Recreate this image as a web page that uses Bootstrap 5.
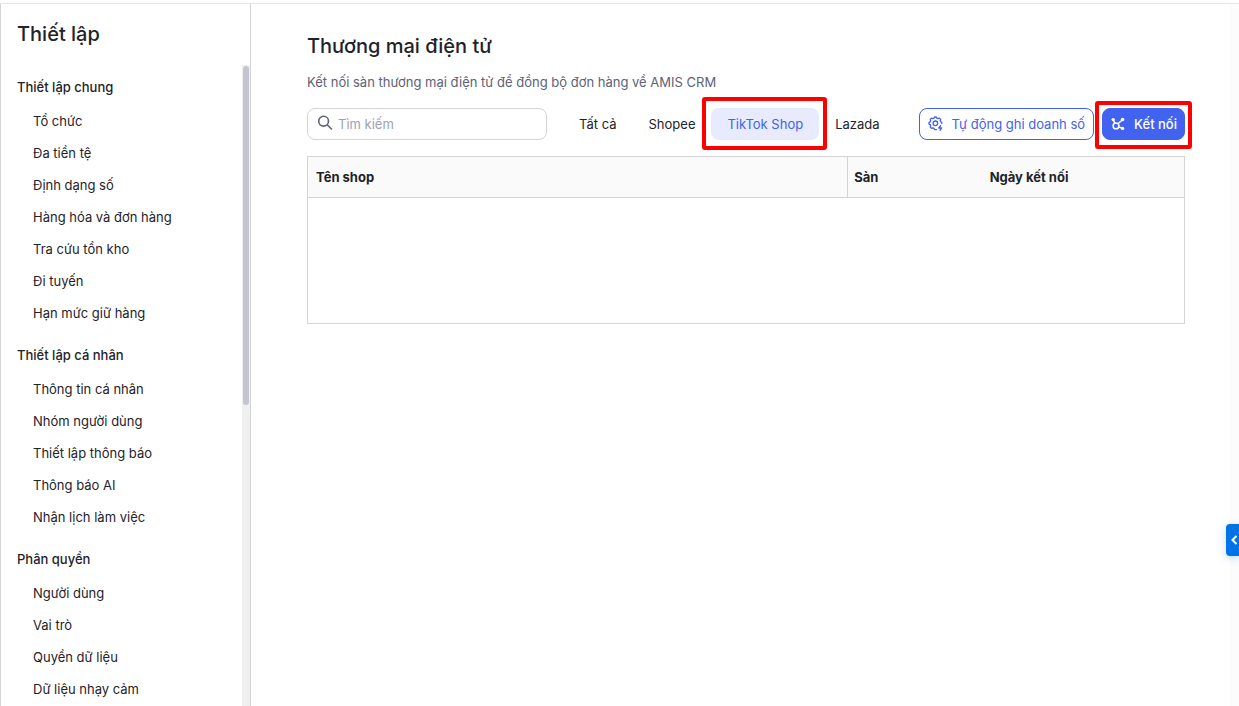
<!DOCTYPE html>
<html lang="vi">
<head>
<meta charset="utf-8">
<meta name="viewport" content="width=device-width, initial-scale=1">
<title>Thiết lập - Thương mại điện tử</title>
<link href="https://cdn.jsdelivr.net/npm/bootstrap@5.3.0/dist/css/bootstrap.min.css" rel="stylesheet">
<style>
  :root { --brand: #4262f0; --ink: #1f2229; --line: #d3d4d8; }
  body { font-family: Inter, "Noto Sans", sans-serif; font-size: 13px; line-height: 20px; color: var(--ink); background: #fff; }
  .app { border-top: 1px solid #e4e5e8; margin-top: 3px; height: calc(100vh - 3px); }
  .sidebar { flex: 0 0 251px; border-left: 1px solid var(--line); border-right: 1px solid var(--line); }
  .page-title { font-size: 20px; line-height: 28px; font-weight: 500; margin: 0; }
  .sidebar .page-title { padding: 16px 16px 17px; }
  .menu-title { font-size: 13px; line-height: 36px; font-weight: 500; margin: 0; }
  .menu-group + .menu-group { margin-top: 8px; }
  .menu-link { display: block; line-height: 32px; padding-left: 16px; color: var(--ink); text-decoration: none; }
  .menu-link:hover { color: var(--brand); }
  .track { width: 8px; background: #f0f0f0; padding: 1px; }
  .thumb { height: 53%; border-radius: 4px; background: #c3c6d1; }
  .content { padding: 28px 45px 0 56px; }
  .edge { flex: 0 0 9px; background: #fcfcfc; }
  .intro { color: #5d6277; }
  .search { width: 240px; margin-right: 16px; }
  .search input { height: 32px; font-size: 13px; border-color: var(--line); border-radius: 8px; padding: 0 12px 0 30px; }
  .search input::placeholder { color: #9da1b3; }
  .search svg { left: 10px; top: 7px; }
  .tab { height: 32px; padding: 0 16px; border: 0; border-radius: 8px; background: transparent; color: var(--ink); }
  .tab.active { background: #e7ebfd; color: var(--brand); }
  .action { height: 32px; padding: 0 8px; font-size: 13px; line-height: 20px; font-weight: 400; border-radius: 8px; white-space: nowrap;
    --bs-btn-color: var(--brand); --bs-btn-border-color: var(--brand); --bs-btn-hover-bg: #e7ebfd; --bs-btn-hover-color: var(--brand); }
  .action.solid { padding: 0 7px; font-weight: 500; --bs-btn-color: #fff; --bs-btn-bg: var(--brand); --bs-btn-hover-bg: #3453dc; --bs-btn-hover-color: #fff; }
  .highlight { position: absolute; inset: -11px -8px -10px -9px; border: 4px solid #f00; border-radius: 3px; pointer-events: none; }
  .highlight.tight { inset: -7px -7px -9px; }
  .shops { table-layout: fixed; border: 1px solid var(--line); margin: 16px 0 0; }
  .shops th { height: 41px; padding: 0 8px; font-weight: 700; background: #fafafa; border-bottom: 1px solid var(--line); vertical-align: middle; color: var(--ink); }
  .shops th + th { padding-left: 6px; }
  .shops th:first-child { border-right: 1px solid var(--line); }
  .shops td { height: 126px; border: 0; }
  .drawer { right: 0; top: 524px; width: 13px; height: 32px; border: 0; border-radius: 4px 0 0 4px; background: #0073e6; box-shadow: 0 2px 8px rgba(0,115,230,.25); }
</style>
</head>
<body class="overflow-hidden">
<div class="app d-flex">
  <aside class="sidebar d-flex flex-column">
    <h1 class="page-title">Thiết lập</h1>
    <div class="d-flex flex-grow-1 overflow-hidden">
      <nav class="flex-grow-1 overflow-hidden pt-1 ps-3" aria-label="Thiết lập">
        <section class="menu-group">
          <h2 class="menu-title">Thiết lập chung</h2>
          <a class="menu-link" href="#">Tổ chức</a>
          <a class="menu-link" href="#">Đa tiền tệ</a>
          <a class="menu-link" href="#">Định dạng số</a>
          <a class="menu-link" href="#">Hàng hóa và đơn hàng</a>
          <a class="menu-link" href="#">Tra cứu tồn kho</a>
          <a class="menu-link" href="#">Đi tuyến</a>
          <a class="menu-link" href="#">Hạn mức giữ hàng</a>
        </section>
        <section class="menu-group">
          <h2 class="menu-title">Thiết lập cá nhân</h2>
          <a class="menu-link" href="#">Thông tin cá nhân</a>
          <a class="menu-link" href="#">Nhóm người dùng</a>
          <a class="menu-link" href="#">Thiết lập thông báo</a>
          <a class="menu-link" href="#">Thông báo AI</a>
          <a class="menu-link" href="#">Nhận lịch làm việc</a>
        </section>
        <section class="menu-group">
          <h2 class="menu-title">Phân quyền</h2>
          <a class="menu-link" href="#">Người dùng</a>
          <a class="menu-link" href="#">Vai trò</a>
          <a class="menu-link" href="#">Quyền dữ liệu</a>
          <a class="menu-link" href="#">Dữ liệu nhạy cảm</a>
        </section>
      </nav>
      <div class="track"><div class="thumb"></div></div>
    </div>
  </aside>

  <main class="content flex-grow-1">
    <h2 class="page-title">Thương mại điện tử</h2>
    <p class="intro mt-2 pt-1 mb-3">Kết nối sàn thương mại điện tử để đồng bộ đơn hàng về AMIS CRM</p>
    <div class="d-flex align-items-center">
      <div class="search position-relative flex-shrink-0">
        <input class="form-control" type="search" placeholder="Tìm kiếm" aria-label="Tìm kiếm">
        <svg class="position-absolute" width="16" height="16" viewBox="0 0 16 16" fill="none" stroke="#5d6277" stroke-width="1.6" aria-hidden="true"><circle cx="6.6" cy="6.2" r="4.9"/><path d="M10.2 9.8 14.9 14.5"/></svg>
      </div>
      <div class="d-flex text-nowrap">
        <button class="tab" type="button">Tất cả</button>
        <button class="tab" type="button">Shopee</button>
        <div class="position-relative"><button class="tab active" type="button">TikTok Shop</button><span class="highlight"></span></div>
        <button class="tab" type="button">Lazada</button>
      </div>
      <div class="d-flex gap-2 ms-auto">
        <button class="btn action d-flex align-items-center gap-2" type="button">
          <svg width="16" height="16" viewBox="0 0 16 16" fill="none" stroke="currentColor" stroke-width="1.3" stroke-linecap="round" stroke-linejoin="round" aria-hidden="true"><path d="M8.6 13.6H6.6L6.1 12.4 4.9 11.9 3.5 12.4 2.2 11.1 2.7 9.8 2.2 8.7 1 8.1V6.4L2.2 5.8 2.7 4.7 2.2 3.4 3.5 2.1 4.9 2.6 6 2.1 6.6 1H8.2L8.8 2.1 10 2.6 11.4 2.1 12.7 3.4 12.2 4.7 12.7 5.8 13.8 6.4V7.6"/><circle cx="7.4" cy="7.3" r="2.3"/><path d="M12.6 9.6 10.8 12H13.6L12.1 14.3" fill="currentColor"/></svg>
          <span>Tự động ghi doanh số</span>
        </button>
        <div class="position-relative">
          <button class="btn action solid d-flex align-items-center gap-2" type="button">
            <svg width="16" height="16" viewBox="0 0 16 16" fill="none" stroke="currentColor" stroke-width="1.5" aria-hidden="true"><circle cx="6" cy="9.9" r="2.9"/><path d="M3.4 3.8 4.8 7.2M8.1 7.8 12.4 3.7M8.7 10.9 12.2 12.3"/><g fill="currentColor" stroke="none"><circle cx="3.2" cy="3.6" r="1.7"/><circle cx="12.6" cy="3.5" r="1.8"/><circle cx="12.6" cy="12.4" r="1.7"/></g></svg>
            <span>Kết nối</span>
          </button>
          <span class="highlight tight"></span>
        </div>
      </div>
    </div>
    <table class="shops table">
      <colgroup><col style="width:61.6%"><col style="width:15.5%"><col></colgroup>
      <thead><tr><th scope="col">Tên shop</th><th scope="col">Sàn</th><th scope="col">Ngày kết nối</th></tr></thead>
      <tbody><tr><td colspan="3"></td></tr></tbody>
    </table>
  </main>
  <div class="edge"></div>
</div>
<button class="drawer position-fixed p-0 d-flex align-items-center justify-content-end" type="button" aria-label="Mở bảng">
  <svg width="9" height="10" viewBox="0 0 9 10" fill="none" stroke="#fff" stroke-width="2" aria-hidden="true"><path d="M6.5 1 2.5 5 6.5 9"/></svg>
</button>
<script src="https://cdn.jsdelivr.net/npm/bootstrap@5.3.0/dist/js/bootstrap.bundle.min.js"></script>
</body>
</html>
